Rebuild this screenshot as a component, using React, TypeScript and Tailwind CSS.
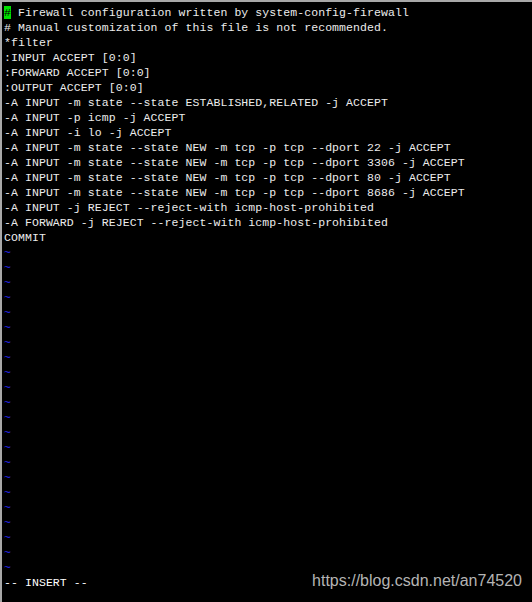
const lines = [
  "# Firewall configuration written by system-config-firewall",
  "# Manual customization of this file is not recommended.",
  "*filter",
  ":INPUT ACCEPT [0:0]",
  ":FORWARD ACCEPT [0:0]",
  ":OUTPUT ACCEPT [0:0]",
  "-A INPUT -m state --state ESTABLISHED,RELATED -j ACCEPT",
  "-A INPUT -p icmp -j ACCEPT",
  "-A INPUT -i lo -j ACCEPT",
  "-A INPUT -m state --state NEW -m tcp -p tcp --dport 22 -j ACCEPT",
  "-A INPUT -m state --state NEW -m tcp -p tcp --dport 3306 -j ACCEPT",
  "-A INPUT -m state --state NEW -m tcp -p tcp --dport 80 -j ACCEPT",
  "-A INPUT -m state --state NEW -m tcp -p tcp --dport 8686 -j ACCEPT",
  "-A INPUT -j REJECT --reject-with icmp-host-prohibited",
  "-A FORWARD -j REJECT --reject-with icmp-host-prohibited",
  "COMMIT",
]

const tildes = Array.from({ length: 22 })

const App = () => {
  return (
    <div className="relative w-[532px] h-[602px] bg-black border-t-2 border-l-2 border-[#a8a8a8] overflow-hidden">
      <div className="pt-[3px] pl-[2px] font-['Liberation_Mono','Courier_New',monospace] text-[11.5px] tracking-[0.08px] leading-[15px] text-[#ececec] whitespace-pre">
        {lines.map((l, i) =>
          i === 0 ? (
            <div key={i}>
              <span className="bg-[#00e000] text-black">#</span>
              {l.slice(1)}
            </div>
          ) : (
            <div key={i}>{l}</div>
          )
        )}
        {tildes.map((_, i) => (
          <div key={"t" + i} className="text-[#2a2aff]">~</div>
        ))}
        <div className="text-white">-- INSERT --</div>
      </div>

      {/* watermark */}
      <div className="absolute right-[10px] bottom-[9px] font-['Liberation_Sans',Arial,sans-serif] text-[16px] text-[#b4b4b4]">
        https://blog.csdn.net/an74520
      </div>
    </div>
  )
}

export default App
